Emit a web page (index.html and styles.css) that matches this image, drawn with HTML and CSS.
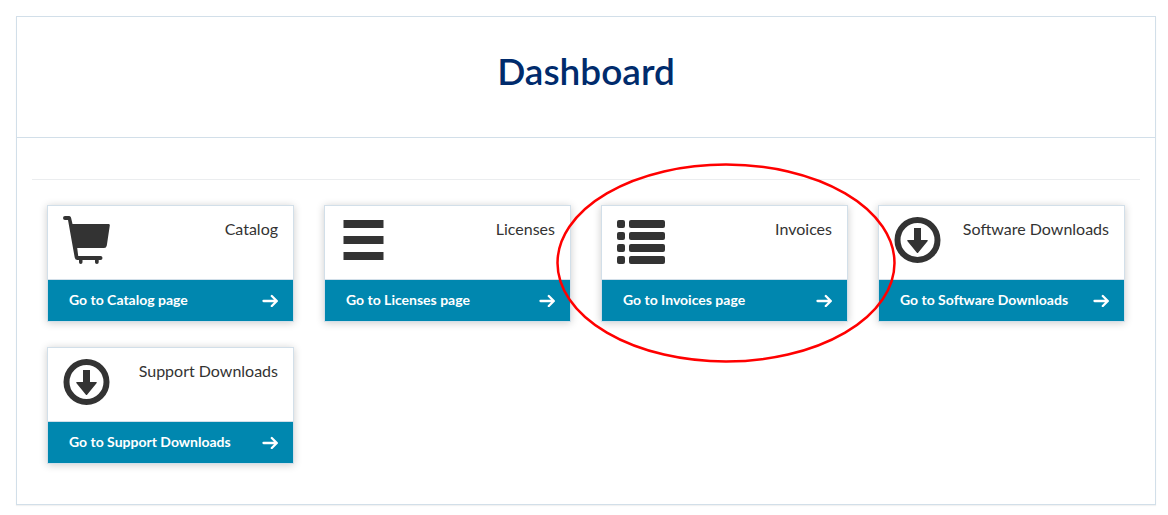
FILE: index.html
```html
<!DOCTYPE html>
<html lang="en">
<head>
<meta charset="utf-8">
<meta name="viewport" content="width=device-width, initial-scale=1">
<title>Dashboard</title>
<link rel="stylesheet" href="styles.css">
</head>
<body>
<svg class="sprite" aria-hidden="true">
  <symbol id="cart" viewBox="0 0 48 48">
    <path d="M2 0H6.200Q7.600 0 8 1.500L9.500 8H45.500Q47 8 46.800 9.500L43.800 29.500Q43.400 32 41 32H14.200L15.200 40H37.500Q39.500 40 39.500 42Q39.500 44 37.500 44H35.700V46.200Q35.700 48 33.900 48Q32 48 32 46.200V44H19.500V46.200Q19.500 48 17.700 48Q16 48 16 46.200V44H14.500Q12.200 44 11.700 41.500L5 4H2Q0 4 0 2Q0 0 2 0Z"/>
  </symbol>
  <symbol id="bars" viewBox="0 0 48 48">
    <path d="M3.500 4h40v8h-40zM3.500 20h40v8h-40zM3.500 36h40v8h-40z"/>
  </symbol>
  <symbol id="list" viewBox="0 0 48 48">
    <rect x="0" y="4" width="8" height="8" rx="2"/><rect x="12" y="4" width="36" height="8" rx="2"/>
    <rect x="0" y="16" width="8" height="8" rx="2"/><rect x="12" y="16" width="36" height="8" rx="2"/>
    <rect x="0" y="28" width="8" height="8" rx="2"/><rect x="12" y="28" width="36" height="8" rx="2"/>
    <rect x="0" y="40" width="8" height="8" rx="2"/><rect x="12" y="40" width="36" height="8" rx="2"/>
  </symbol>
  <symbol id="download" viewBox="0 0 48 48">
    <circle cx="23.500" cy="24" r="20" fill="none" stroke="currentColor" stroke-width="6"/>
    <path d="M20 12h7v12h6q1.500 0 .5 1.200L24.300 36.500q-.8 1-1.600 0L13.500 25.200q-1-1.200.5-1.200h6z"/>
  </symbol>
  <symbol id="arrow" viewBox="0 0 16 14">
    <path d="M1.500 8H14.500M9.800 3L14.800 8L9.800 13" fill="none" stroke="currentColor" stroke-width="2.300" stroke-linecap="round" stroke-linejoin="round"/>
  </symbol>
</svg>
<main class="panel">
  <header class="panel-header"><h1 class="heading">Dashboard</h1></header>
  <div class="panel-body">
    <hr class="rule">
    <div class="cards">
      <section class="card">
        <div class="card-top"><svg class="icon" aria-hidden="true"><use href="#cart"/></svg><h2 class="title">Catalog</h2></div>
        <a class="card-link" href="#catalog"><span>Go to Catalog page</span><svg class="arrow" aria-hidden="true"><use href="#arrow"/></svg></a>
      </section>
      <section class="card">
        <div class="card-top"><svg class="icon" aria-hidden="true"><use href="#bars"/></svg><h2 class="title">Licenses</h2></div>
        <a class="card-link" href="#licenses"><span>Go to Licenses page</span><svg class="arrow" aria-hidden="true"><use href="#arrow"/></svg></a>
      </section>
      <section class="card">
        <div class="card-top"><svg class="icon" aria-hidden="true"><use href="#list"/></svg><h2 class="title">Invoices</h2></div>
        <a class="card-link" href="#invoices"><span>Go to Invoices page</span><svg class="arrow" aria-hidden="true"><use href="#arrow"/></svg></a>
        <svg class="highlight" viewBox="0 0 340 200" preserveAspectRatio="none" aria-hidden="true"><ellipse cx="170" cy="100" rx="168.500" ry="98.500"/></svg>
      </section>
      <section class="card">
        <div class="card-top"><svg class="icon" aria-hidden="true"><use href="#download"/></svg><h2 class="title">Software Downloads</h2></div>
        <a class="card-link" href="#software"><span>Go to Software Downloads</span><svg class="arrow" aria-hidden="true"><use href="#arrow"/></svg></a>
      </section>
      <section class="card">
        <div class="card-top"><svg class="icon" aria-hidden="true"><use href="#download"/></svg><h2 class="title">Support Downloads</h2></div>
        <a class="card-link" href="#support"><span>Go to Support Downloads</span><svg class="arrow" aria-hidden="true"><use href="#arrow"/></svg></a>
      </section>
    </div>
  </div>
</main>
</body>
</html>
```
FILE: styles.css
```css
* { box-sizing: border-box; }
body {
  margin: 0;
  padding: 16px 12px 8px 16px;
  background: #fff;
  color: #333;
  font-family: Lato, sans-serif;
}
.sprite { position: absolute; width: 0; height: 0; }
.panel {
  border: 1px solid #d2dfe9;
  background: #fff;
  box-shadow: 0 1px 1px rgba(0, 0, 0, 0.05);
}
.panel-header {
  padding: 34px 15px 46px;
  border-bottom: 1px solid #d2dfe9;
}
.heading {
  margin: 0;
  color: #002b6c;
  font-size: 37px;
  font-weight: 600;
  line-height: 40px;
  text-align: center;
}
.panel-body { padding: 41px 15px 40px; }
.rule {
  margin: 0 0 25px;
  border: 0;
  border-top: 1px solid #ebedef;
}
.cards {
  display: grid;
  grid-template-columns: repeat(auto-fill, minmax(240px, 1fr));
  gap: 25px 30px;
  padding: 0 15px;
}
.card {
  position: relative;
  border: 1px solid #d2dfe9;
  background: #fff;
  box-shadow: 0 1px 8px rgba(0, 0, 0, 0.2);
}
.card-top {
  display: flex;
  justify-content: space-between;
  align-items: flex-start;
  min-height: 74px;
  padding: 10px 15px;
  border-bottom: 1px solid #d2dfe9;
}
.icon { width: 48px; height: 48px; fill: currentColor; }
.title {
  margin: 3px 0 0;
  font-size: 16px;
  font-weight: 400;
  line-height: 20px;
}
.card-link {
  display: flex;
  justify-content: space-between;
  align-items: center;
  padding: 10px 15px 11px 21px;
  background: #0087af;
  color: #fff;
  font-size: 14px;
  font-weight: 700;
  line-height: 20px;
  text-decoration: none;
}
.arrow { width: 16px; height: 14px; }
.highlight {
  position: absolute;
  z-index: 1;
  top: -43px;
  left: -46px;
  width: 340px;
  height: 200px;
  fill: none;
  stroke: #f00;
  stroke-width: 2.5;
  pointer-events: none;
}
```
